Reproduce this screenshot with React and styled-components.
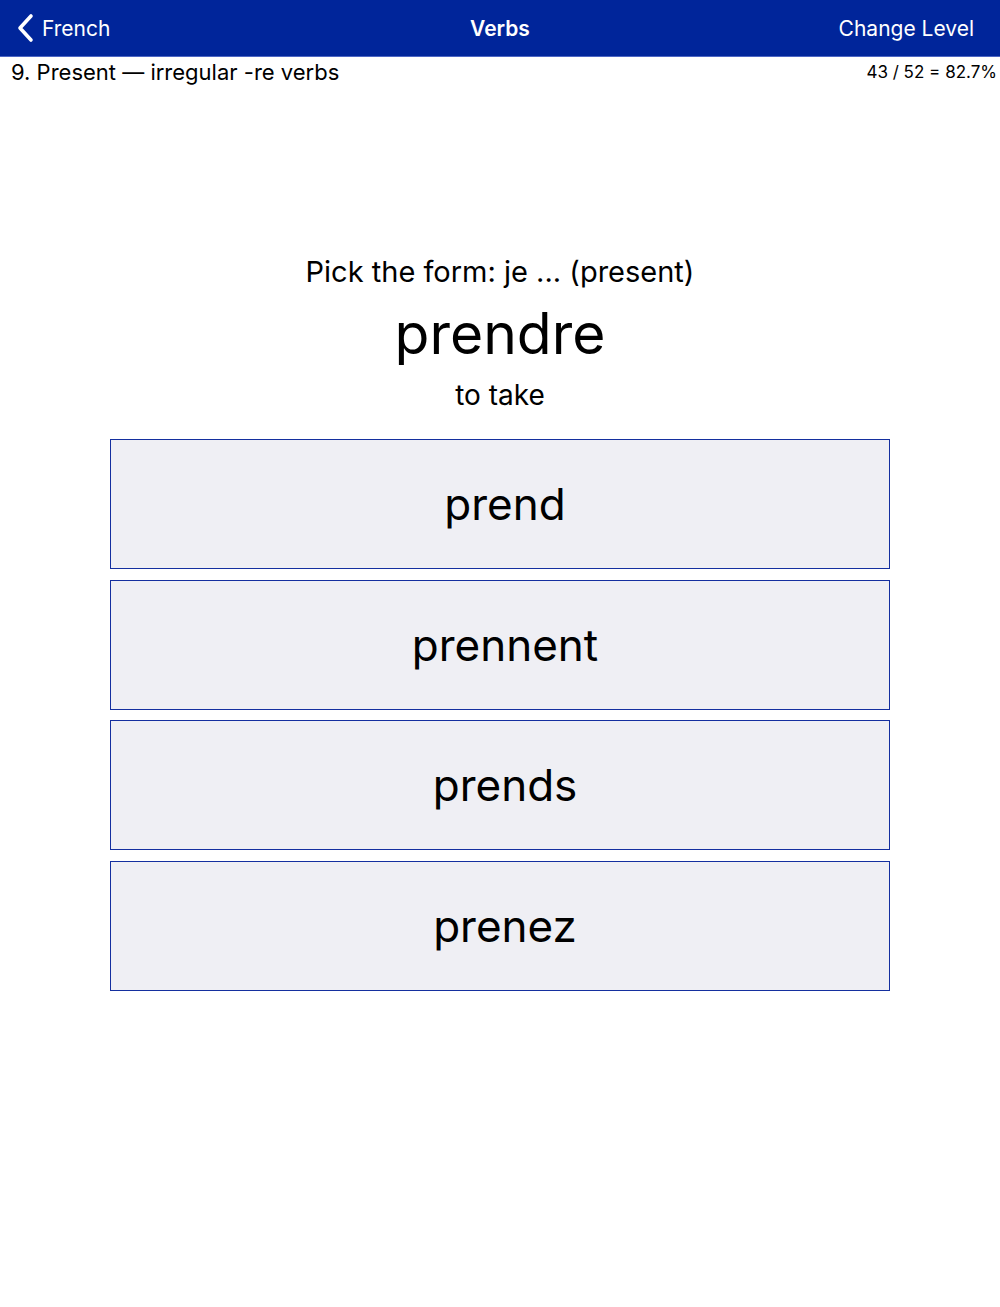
import React from "react";
import styled, { createGlobalStyle } from "styled-components";

const GlobalStyle = createGlobalStyle`
    body {
        margin:0;
        background:#fff;
        font-family:Inter, "Noto Sans", sans-serif;
        color:#000;
    }
`;

const Page = styled.div`
    width:1000px;
    min-height:1307px;
    display:flex;
    flex-direction:column;
`;

const NavBar = styled.div`
    height:56px;
    background:#00259a;
    border-bottom:1px solid #4c66c4;
    display:grid;
    grid-template-columns:1fr auto 1fr;
    align-items:center;
    padding:0 16px;
    color:#fff;
    font-size:21px;
`;

const Back = styled.div`
    display:flex;
    align-items:center;
    gap:6px;
    justify-self:start;
`;

const Title = styled.div`
    font-weight:600;
    font-size:21px;
`;

const RightAction = styled.div`
    justify-self:end;
    margin-right:10px;
`;

const InfoRow = styled.div`
    display:flex;
    justify-content:space-between;
    align-items:center;
    padding:0 3px 0 11px;
    height:30px;
`;

const Lesson = styled.div`
    font-size:22px;
`;

const Score = styled.div`
    font-size:17px;
`;

const Question = styled.div`
    display:flex;
    flex-direction:column;
    align-items:center;
    margin-top:167px;
`;

const Prompt = styled.div`
    font-size:29px;
    line-height:36px;
`;

const Word = styled.div`
    font-size:57px;
    line-height:68px;
    margin-top:10px;
`;

const Meaning = styled.div`
    font-size:28px;
    line-height:36px;
    margin-top:9px;
`;

const Choices = styled.div`
    display:flex;
    flex-direction:column;
    gap:10.5px;
    margin:26px 110px 0;
`;

const Choice = styled.button`
    height:130px;
    background:#efeff4;
    border:1.5px solid #142f9f;
    font-family:Inter, "Noto Sans", sans-serif;
    font-size:44px;
    color:#000;
    padding:0 0 0 10px;
    cursor:pointer;
`;

const options = ["prend", "prennent", "prends", "prenez"];

export default () => (
    <Page>
        <GlobalStyle />
        <NavBar>
            <Back>
                <svg width="20" height="30" viewBox="0 0 20 30">
                    <path d="M15 3 L4 15 L15 27" fill="none" stroke="#fff" strokeWidth="3.6" strokeLinecap="round" strokeLinejoin="round" />
                </svg>
                French
            </Back>
            <Title>Verbs</Title>
            <RightAction>Change Level</RightAction>
        </NavBar>
        <InfoRow>
            <Lesson>9. Present — irregular -re verbs</Lesson>
            <Score>43 / 52 = 82.7%</Score>
        </InfoRow>
        <Question>
            <Prompt>Pick the form: je ... (present)</Prompt>
            <Word>prendre</Word>
            <Meaning>to take</Meaning>
        </Question>
        <Choices>
            {options.map(o => (
                <Choice key={o}>{o}</Choice>
            ))}
        </Choices>
    </Page>
);
